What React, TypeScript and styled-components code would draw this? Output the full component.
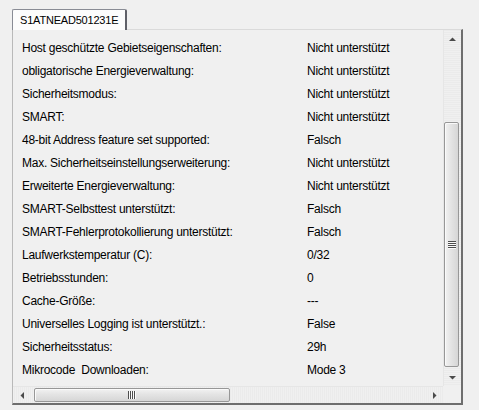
import React from 'react';
import styled, { createGlobalStyle } from 'styled-components';

const GlobalStyle = createGlobalStyle`
  html, body {
    margin: 0;
    padding: 0;
    background: #f0f0f0;
  }
  body {
    font-family: 'Liberation Sans', Arial, sans-serif;
    font-size: 12px;
    color: #000;
  }
`;

// --- Layout ---
const Window = styled.div`
  width: 479px;
  height: 410px;
  padding: 9px 0 0 12px;
  box-sizing: border-box;
  display: flex;
  flex-direction: column;
`;

const TabStrip = styled.div`
  display: flex;
  height: 21px;
  margin-bottom: -1px;
  position: relative;
  z-index: 1;
`;

const Tab = styled.div`
  width: 115px;
  box-sizing: border-box;
  border: 1px solid #898c95;
  border-right: 2px solid #5f6068;
  border-bottom: none;
  border-radius: 2px 2px 0 0;
  background: #fcfcfc;
  padding: 4px 0 0 7px;
  font-size: 11px;
  letter-spacing: -0.2px;
`;

const Panel = styled.div`
  width: 451px;
  height: 376px;
  box-sizing: border-box;
  border: 1px solid #b9b9b9;
  border-top-color: #dadada;
  border-right: 2px solid #6e6e6e;
  border-bottom: 2px solid #6e6e6e;
  display: grid;
  grid-template-columns: 1fr 18px;
  grid-template-rows: 1fr 17px;
  background: #f0f0f0;
`;

const List = styled.div`
  padding: 7px 0 0 9px;
  overflow: hidden;
`;

const Row = styled.div`
  display: grid;
  grid-template-columns: 285px 1fr;
  height: 23px;
  line-height: 23px;
  white-space: pre;
`;

const Cell = styled.span`
  font-size: 12px;
  letter-spacing: -0.25px;
`;

// --- Scroll bars ---
const VBar = styled.div`
  display: flex;
  flex-direction: column;
  border-left: 1px solid #e6e6e6;
  background: repeating-linear-gradient(0deg, #f0f0f0 0 1px, #ebebeb 1px 2px);
`;

const HBar = styled.div`
  display: flex;
  border-top: 1px solid #e6e6e6;
  background: repeating-linear-gradient(90deg, #f0f0f0 0 1px, #ebebeb 1px 2px);
`;

const Corner = styled.div`
  background: #f0f0f0;
`;

const ArrowButton = styled.div<{ $size: number }>`
  flex: 0 0 ${(p) => p.$size}px;
  display: flex;
  align-items: center;
  justify-content: center;
`;

const Track = styled.div<{ $vertical?: boolean }>`
  flex: 1;
  display: flex;
  flex-direction: ${(p) => (p.$vertical ? 'column' : 'row')};
  padding: ${(p) => (p.$vertical ? '75px 1px 0 0' : '1px 0 1px 0')};
`;

const Thumb = styled.div<{ $vertical?: boolean; $length: number; $offset: number }>`
  box-sizing: border-box;
  ${(p) =>
    p.$vertical
      ? `height: ${p.$length}px; width: 15px;`
      : `width: ${p.$length}px; height: 14px; margin-left: ${p.$offset}px;`}
  border: 1px solid #979797;
  border-radius: 2px;
  background: ${(p) =>
    p.$vertical
      ? 'linear-gradient(90deg, #f2f2f2 0%, #e4e4e4 45%, #d6d6d6 100%)'
      : 'linear-gradient(180deg, #f2f2f2 0%, #e4e4e4 45%, #d6d6d6 100%)'};
  box-shadow: inset 1px 1px 0 #fafafa;
  display: flex;
  align-items: center;
  justify-content: center;
`;

// four grip lines in the middle of a thumb
const Grip = ({ vertical }: { vertical?: boolean }) => (
  <svg width="8" height="8" viewBox="0 0 8 8">
    {[0, 2, 4, 6].map((n) =>
      vertical ? (
        <g key={n}>
          <rect x="0" y={n} width="8" height="1" fill="#4e4e4e" />
          <rect x="0" y={n + 1} width="8" height="1" fill="#fbfbfb" />
        </g>
      ) : (
        <g key={n}>
          <rect x={n} y="0" width="1" height="8" fill="#4e4e4e" />
          <rect x={n + 1} y="0" width="1" height="8" fill="#fbfbfb" />
        </g>
      )
    )}
  </svg>
);

const Arrow = ({ dir }: { dir: 'up' | 'down' | 'left' | 'right' }) => {
  const pts = {
    up: '0,4 3.5,0.5 7,4',
    down: '0,0 7,0 3.5,3.5',
    left: '4,0 4,7 0.5,3.5',
    right: '0,0 0,7 3.5,3.5',
  }[dir];
  const vertical = dir === 'up' || dir === 'down';
  return (
    <svg width={vertical ? 7 : 4} height={vertical ? 4 : 7} viewBox={vertical ? '0 0 7 4' : '0 0 4 7'}>
      <polygon points={pts} fill="#4a4a4a" />
    </svg>
  );
};

const rows: [string, string][] = [
  ['Host geschützte Gebietseigenschaften:', 'Nicht unterstützt'],
  ['obligatorische Energieverwaltung:', 'Nicht unterstützt'],
  ['Sicherheitsmodus:', 'Nicht unterstützt'],
  ['SMART:', 'Nicht unterstützt'],
  ['48-bit Address feature set supported:', 'Falsch'],
  ['Max. Sicherheitseinstellungserweiterung:', 'Nicht unterstützt'],
  ['Erweiterte Energieverwaltung:', 'Nicht unterstützt'],
  ['SMART-Selbsttest unterstützt:', 'Falsch'],
  ['SMART-Fehlerprotokollierung unterstützt:', 'Falsch'],
  ['Laufwerkstemperatur (C):', '0/32'],
  ['Betriebsstunden:', '0'],
  ['Cache-Größe:', '---'],
  ['Universelles Logging ist unterstützt.:', 'False'],
  ['Sicherheitsstatus:', '29h'],
  ['Mikrocode  Downloaden:', 'Mode 3'],
];

const App: React.FC = () => {
  return (
    <>
      <GlobalStyle />
      <Window>
        <TabStrip>
          <Tab>S1ATNEAD501231E</Tab>
        </TabStrip>
        <Panel>
          <List>
            {rows.map(([label, value]) => (
              <Row key={label}>
                <Cell>{label}</Cell>
                <Cell>{value}</Cell>
              </Row>
            ))}
          </List>
          <VBar>
            <ArrowButton $size={17}>
              <Arrow dir="up" />
            </ArrowButton>
            <Track $vertical>
              <Thumb $vertical $length={245} $offset={0}>
                <Grip vertical />
              </Thumb>
            </Track>
            <ArrowButton $size={17}>
              <Arrow dir="down" />
            </ArrowButton>
          </VBar>
          <HBar>
            <ArrowButton $size={18}>
              <Arrow dir="left" />
            </ArrowButton>
            <Track>
              <Thumb $length={196} $offset={3}>
                <Grip />
              </Thumb>
            </Track>
            <ArrowButton $size={17}>
              <Arrow dir="right" />
            </ArrowButton>
          </HBar>
          <Corner />
        </Panel>
      </Window>
    </>
  );
};

export default App;
